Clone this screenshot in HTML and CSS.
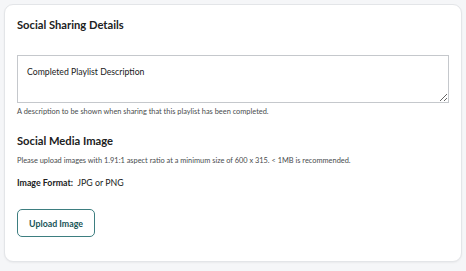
FILE: index.html
```html
<!DOCTYPE html>
<html lang="en">
<head>
    <meta charset="UTF-8">
    <title>Social Sharing Details</title>
    <link rel="stylesheet" href="styles.css">
</head>
<body>
    <div class="card">
        <h2 class="card-title">Social Sharing Details</h2>

        <textarea class="desc-input" placeholder="Completed Playlist Description"></textarea>
        <p class="hint">A description to be shown when sharing that this playlist has been completed.</p>

        <h2 class="section-title">Social Media Image</h2>
        <p class="hint hint-upload">Please upload images with 1.91:1 aspect ratio at a minimum size of 600 x 315. &lt; 1MB is recommended.</p>
        <p class="format"><b>Image Format:</b>&nbsp; JPG or PNG</p>

        <button type="button" class="upload-btn">Upload Image</button>
    </div>
</body>
</html>
```

FILE: styles.css
```css
body {
    font-family: Lato, "Open Sans", sans-serif;
    background-color: #f5f6f8;
    margin: 0;
    padding: 4px 4px;
    color: #202122;
}

.card {
    background-color: white;
    border: 1px solid #e3e5e8;
    border-radius: 9px;
    padding: 13px 12px 24px 12px;
    box-shadow: 0 1px 2px rgba(0, 0, 0, 0.05);
}

.card-title {
    font-size: 11.2px;
    font-weight: 700;
    margin: 0 0 23px 0;
    line-height: 14px;
}

.desc-input {
    display: block;
    box-sizing: border-box;
    width: 100%;
    height: 48px;
    margin: 0;
    padding: 10px 9px;
    border: 1px solid #c5c8cc;
    border-radius: 0;
    font-family: inherit;
    font-size: 8.7px;
    line-height: 12px;
}

.desc-input::placeholder {
    color: #202122;
}

.hint {
    font-size: 7.4px;
    color: #494c4e;
    margin: 4px 0 0 0;
    line-height: 10px;
}

.section-title {
    font-size: 11.2px;
    font-weight: 700;
    margin: 17px 0 0 0;
    line-height: 14px;
}

.hint-upload {
    margin-top: 8px;
}

.format {
    font-size: 8.8px;
    margin: 11px 0 0 0;
    line-height: 12px;
}

.upload-btn {
    display: block;
    margin-top: 20px;
    width: 78px;
    height: 28px;
    padding: 0;
    background-color: white;
    border: 1px solid #3d7e80;
    border-radius: 5px;
    color: #175557;
    font-family: inherit;
    font-weight: 700;
    font-size: 8.8px;
}
```
